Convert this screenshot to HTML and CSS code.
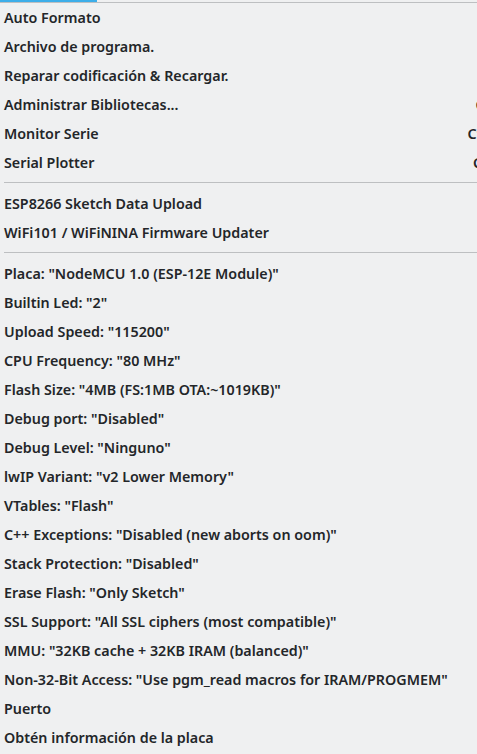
FILE: index.html
```html
<!DOCTYPE html>
<html lang="es">
<head>
<meta charset="utf-8">
<link rel="stylesheet" href="styles.css">
</head>
<body>
<div class="top"><div class="tab-indicator"></div></div>
<div class="menu">
  <div class="item"><span class="label">Auto Formato</span></div>
  <div class="item"><span class="label">Archivo de programa.</span></div>
  <div class="item"><span class="label">Reparar codificación &amp; Recargar.</span></div>
  <div class="item"><span class="label">Administrar Bibliotecas...</span><span class="sc">Ctrl+Mayús+I</span></div>
  <div class="item"><span class="label">Monitor Serie</span><span class="sc">Ctrl+Mayús+M</span></div>
  <div class="item"><span class="label">Serial Plotter</span><span class="sc">Ctrl+Mayús+L</span></div>
  <div class="sep"></div>
  <div class="item"><span class="label">ESP8266 Sketch Data Upload</span></div>
  <div class="item"><span class="label">WiFi101 / WiFiNINA Firmware Updater</span></div>
  <div class="sep"></div>
  <div class="item"><span class="label">Placa: "NodeMCU 1.0 (ESP-12E Module)"</span></div>
  <div class="item"><span class="label">Builtin Led: "2"</span></div>
  <div class="item"><span class="label">Upload Speed: "115200"</span></div>
  <div class="item"><span class="label">CPU Frequency: "80 MHz"</span></div>
  <div class="item"><span class="label">Flash Size: "4MB (FS:1MB OTA:~1019KB)"</span></div>
  <div class="item"><span class="label">Debug port: "Disabled"</span></div>
  <div class="item"><span class="label">Debug Level: "Ninguno"</span></div>
  <div class="item"><span class="label">lwIP Variant: "v2 Lower Memory"</span></div>
  <div class="item"><span class="label">VTables: "Flash"</span></div>
  <div class="item"><span class="label">C++ Exceptions: "Disabled (new aborts on oom)"</span></div>
  <div class="item"><span class="label">Stack Protection: "Disabled"</span></div>
  <div class="item"><span class="label">Erase Flash: "Only Sketch"</span></div>
  <div class="item"><span class="label">SSL Support: "All SSL ciphers (most compatible)"</span></div>
  <div class="item"><span class="label">MMU: "32KB cache + 32KB IRAM (balanced)"</span></div>
  <div class="item"><span class="label">Non-32-Bit Access: "Use pgm_read macros for IRAM/PROGMEM"</span></div>
  <div class="item"><span class="label">Puerto</span></div>
  <div class="item"><span class="label">Obtén información de la placa</span></div>
</div>
</body>
</html>
```
FILE: styles.css
```css
html, body {
  margin: 0;
  padding: 0;
  width: 477px;
  height: 754px;
  overflow: hidden;
  background: #eff0f1;
}
body {
  font-family: "Noto Sans", "Open Sans", sans-serif;
  font-size: 14.3px;
  font-weight: 600;
  color: #232629;
}
.top {
  height: 2px;
  border-bottom: 1px solid #bdbfc1;
  display: flex;
}
.tab-indicator {
  width: 97px;
  height: 2px;
  background: #3daee9;
}
.menu {
  width: 568px;
  display: flex;
  flex-direction: column;
}
.item {
  height: 29px;
  display: flex;
  align-items: center;
  padding: 0 0 0 4px;
  white-space: nowrap;
}
.item .sc {
  margin-left: auto;
}
.sep {
  height: 1px;
  margin: 5px 0 6px 4px;
  background: #bdbfc1;
}
```
